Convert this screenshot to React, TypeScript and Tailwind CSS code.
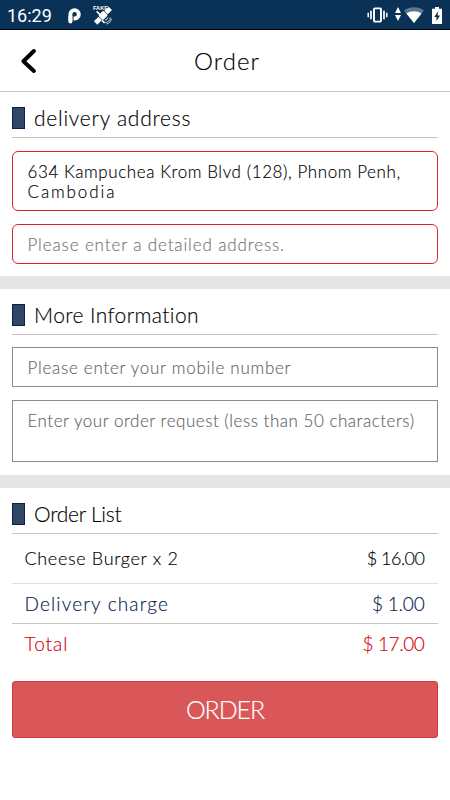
import type { ReactNode } from 'react';

/* Status bar */

const SatelliteIcon = () => (
  <svg className="ml-[12px] mt-[1px]" width="20" height="20" viewBox="0 0 20 20" fill="none">
    <g transform="rotate(-45 10 10.5)" fill="#fff">
      <rect x="-0.5" y="8.2" width="6.5" height="4.8" />
      <rect x="6.6" y="7.2" width="7" height="6.6" rx="1" />
      <rect x="14.2" y="8.2" width="6" height="4.8" />
    </g>
    <path d="M3.6 6.4l4.4 4M9 15.4l2.6 2.6" stroke="#fff" strokeWidth="1.6" />
    <path d="M12.2 17.6a5 5 0 0 0 5-5M11.8 15.2a3 3 0 0 0 3-3M13.5 19a6 6 0 0 0 4.8-5.5" stroke="#d5dde5" strokeWidth="0.9" />
    <text x="0" y="5" fontSize="5.6" fontWeight="700" fontFamily="Liberation Sans" fill="#fff">FAKE</text>
  </svg>
);

const StatusBar = () => (
  <div className="flex h-[30px] items-center border-b border-black bg-[#0a3257] text-white [-webkit-text-stroke:0]">
    <span className="ml-[7px] mt-[2px] w-[46px] whitespace-nowrap font-[Roboto] text-[18px] leading-none font-normal">16:29</span>
    {/* rounded "P" notification */}
    <svg className="ml-[15px] mt-[2px]" width="13" height="16" viewBox="0 0 13 16" fill="none">
      <path d="M2.4 13.4V6.3a4.2 4.2 0 1 1 4.3 4.2H5.6" stroke="#fff" strokeWidth="3.9" />
      <path d="M0.45 8v5.6a1.95 1.95 0 0 0 3.9 0V8z" fill="#fff" />
    </svg>
    <SatelliteIcon />
    <div className="ml-auto flex items-center pr-[8px] pt-[1px]">
      <svg width="21" height="16" viewBox="0 0 21 16" fill="none" stroke="#fff">
        <rect x="7" y="1.4" width="7" height="13.2" rx="0.8" strokeWidth="1.9" />
        <path d="M4 3.8v8.4M17 3.8v8.4" strokeWidth="1.7" />
        <path d="M1.2 5.8v4.4M19.8 5.8v4.4" strokeWidth="1.5" />
      </svg>
      <svg className="ml-[7px] -mt-[3px]" width="6" height="14" viewBox="0 0 6 14" fill="#fff">
        <path d="M3 0l3 6H0zM3 14L0 8h6z" />
      </svg>
      <svg className="ml-[3px]" width="20" height="16" viewBox="0 0 20 16">
        <path d="M10 16L0 3.4C5.5-.8 14.5-.8 20 3.4z" fill="#5b7892" />
        <path d="M10 16L2.4 6.4c4.5-3 10.7-3 15.2 0z" fill="#fff" />
      </svg>
      <svg className="ml-[8px]" width="10" height="17" viewBox="0 0 10 17">
        <path d="M3 0h4v1.8h3V17H0V1.8h3z" fill="#fff" />
        <path d="M6.2 4L2.2 10h2.3v4.3L8 8.4H5.6z" fill="#0a3257" />
      </svg>
    </div>
  </div>
);

/* Layout pieces */

const Header = () => (
  <header className="flex h-[62px] items-center border-b border-[#c8c8c8]">
    <svg className="ml-[20px] shrink-0" width="17" height="26" viewBox="0 0 17 26" fill="none">
      <path d="M13.9 3L3.4 13.3l10.5 9.6" stroke="#000" strokeWidth="4" strokeLinecap="round" strokeLinejoin="round" />
    </svg>
    <h1 className="flex-1 pt-[1px] pr-[33px] text-center text-[24px] leading-none tracking-[1px]">Order</h1>
  </header>
);

const SectionTitle = ({ title, tracking }: { title: string; tracking: string }) => (
  <div className="flex h-[31px] items-start border-b border-[#c4c4c4]">
    <span className="h-[22px] w-[13px] border border-[#0a1f4c] bg-[#304866]" />
    <h2 className={`ml-[9px] text-[21px] leading-[22px] ${tracking}`}>{title}</h2>
  </div>
);

const Divider = () => <div className="h-[13px] bg-[#e6e6e6]" />;

const Field = ({ className, children }: { className: string; children: ReactNode }) => (
  <div className={`border px-[14.5px] pt-[10px] text-[17px] leading-[20px] whitespace-nowrap ${className}`}>{children}</div>
);

const rows = [
  { label: 'Cheese Burger x 2', price: '$ 16.00', row: 'h-[50px] border-b border-[#e0e0e0] text-[18px] text-black', labelTracking: 'tracking-[0.65px]', priceTracking: 'tracking-[-0.5px]' },
  { label: 'Delivery charge', price: '$ 1.00', row: 'h-[40px] border-b border-[#c4c4c4] pt-[1px] text-[19px] text-[#061d4f]', labelTracking: 'tracking-[1.15px]', priceTracking: 'tracking-[-0.2px]' },
  { label: 'Total', price: '$ 17.00', row: 'h-[40px] text-[19px] text-[#d8000c]', labelTracking: 'tracking-[1px]', priceTracking: 'tracking-[-0.4px]' },
];

export default function App() {
  return (
    <div className="flex h-[800px] w-[450px] flex-col overflow-hidden bg-white font-[Lato,sans-serif] font-light text-black [-webkit-text-stroke:0.15px]">
      <StatusBar />
      <Header />

      {/* Delivery address */}
      <section className="h-[184px] px-[12px] pt-[15px]">
        <SectionTitle title="delivery address" tracking="tracking-[0.75px]" />
        <Field className="mt-[13px] h-[60px] rounded-[6px] border-[#d8262b]">
          <p className="tracking-[0.58px]">634 Kampuchea Krom Blvd (128), Phnom Penh,</p>
          <p className="tracking-[1.9px]">Cambodia</p>
        </Field>
        <Field className="mt-[13px] h-[40px] rounded-[6px] border-[#d8262b] tracking-[0.87px] text-[#757575]">
          Please enter a detailed address.
        </Field>
      </section>

      <Divider />

      {/* Contact details and request */}
      <section className="h-[186px] px-[12px] pt-[15px]">
        <SectionTitle title="More Information" tracking="tracking-[0.4px]" />
        <Field className="mt-[12px] h-[40px] border-[#8c8c8c] tracking-[0.72px] text-[#666]">
          Please enter your mobile number
        </Field>
        <Field className="mt-[13px] h-[62px] border-[#8c8c8c] tracking-[0.52px] text-[#666]">
          Enter your order request (less than 50 characters)
        </Field>
      </section>

      <Divider />

      {/* Order summary */}
      <section className="px-[12px] pt-[15px]">
        <SectionTitle title="Order List" tracking="tracking-[-0.25px]" />
        {rows.map((r) => (
          <div key={r.label} className={`flex items-center justify-between pr-[13.5px] pl-[12.5px] ${r.row}`}>
            <span className={r.labelTracking}>{r.label}</span>
            <span className={r.priceTracking}>{r.price}</span>
          </div>
        ))}
        <button className="mt-[17px] h-[57px] w-full rounded-[3px] border border-[#d5393d] bg-[#da5759] text-[25px] tracking-[-1.1px] text-white">
          ORDER
        </button>
      </section>
    </div>
  );
}
